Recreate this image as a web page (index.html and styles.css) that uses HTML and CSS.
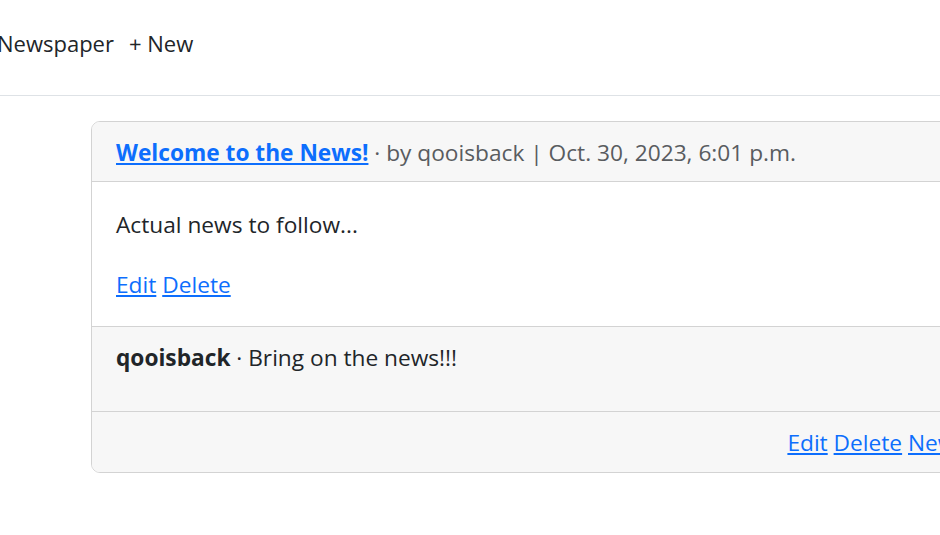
FILE: index.html
```html
<!DOCTYPE html>
<html lang="en">
<head>
<meta charset="utf-8">
<title>Newspaper</title>
<link rel="stylesheet" href="styles.css">
</head>
<body>
<div class="page">
  <nav class="navbar">
    <div class="nav-inner">
      <a class="brand" href="#">Newspaper</a>
      <a class="nav-link" href="#">+ New</a>
    </div>
  </nav>
  <main class="main">
    <article class="card">
      <header class="card-header">
        <a class="title" href="#">Welcome to the News!</a><span class="meta"> · by qooisback | Oct. 30, 2023, 6:01 p.m.</span>
      </header>
      <section class="card-body">
        <p class="lead-text">Actual news to follow...</p>
        <div class="links"><a href="#">Edit</a> <a href="#">Delete</a></div>
      </section>
      <section class="comment">
        <p><strong>qooisback</strong> · Bring on the news!!!</p>
      </section>
      <footer class="card-footer">
        <a href="#">Edit</a> <a href="#">Delete</a> <a href="#">New Comment</a>
      </footer>
    </article>
  </main>
</div>
</body>
</html>
```

FILE: styles.css
```css
html, body {
  margin: 0;
  padding: 0;
  background: #fff;
  overflow: hidden;
}
body {
  font-family: "Open Sans", "Noto Sans", sans-serif;
  font-size: 22.7px;
  line-height: 36px;
  color: #212529;
  width: 940px;
  height: 535px;
}
a {
  color: #0d6efd;
  text-decoration: underline;
  text-underline-offset: 2px;
}
.navbar {
  height: 95px;
  border-bottom: 1px solid #dee2e6;
  display: flex;
  align-items: center;
}
.nav-inner {
  display: flex;
  gap: 15px;
  margin-left: -3px;
  margin-top: -9px;
  font-size: 22px;
}
.nav-inner a {
  color: #212529;
  text-decoration: none;
}
.main {
  padding: 25px 0 0 91px;
}
.card {
  width: 998px;
  border: 1px solid #d3d3d3;
  border-radius: 9px;
  overflow: hidden;
}
.card-header {
  background: #f7f7f7;
  padding: 13px 24px 10px;
  border-bottom: 1px solid #d3d3d3;
}
.title {
  font-weight: 700;
}
.meta {
  color: #595c5f;
}
.card-body {
  padding: 25px 24px 23px;
}
.lead-text {
  margin: 0 0 24px;
}
.comment {
  background: #f7f7f7;
  padding: 13px 24px 11px;
  border-top: 1px solid #d3d3d3;
  border-bottom: 1px solid #d3d3d3;
}
.comment p {
  margin: 0 0 24px;
}
.card-footer {
  background: #f7f7f7;
  padding: 13px 24px 11px;
  text-align: right;
}
```
